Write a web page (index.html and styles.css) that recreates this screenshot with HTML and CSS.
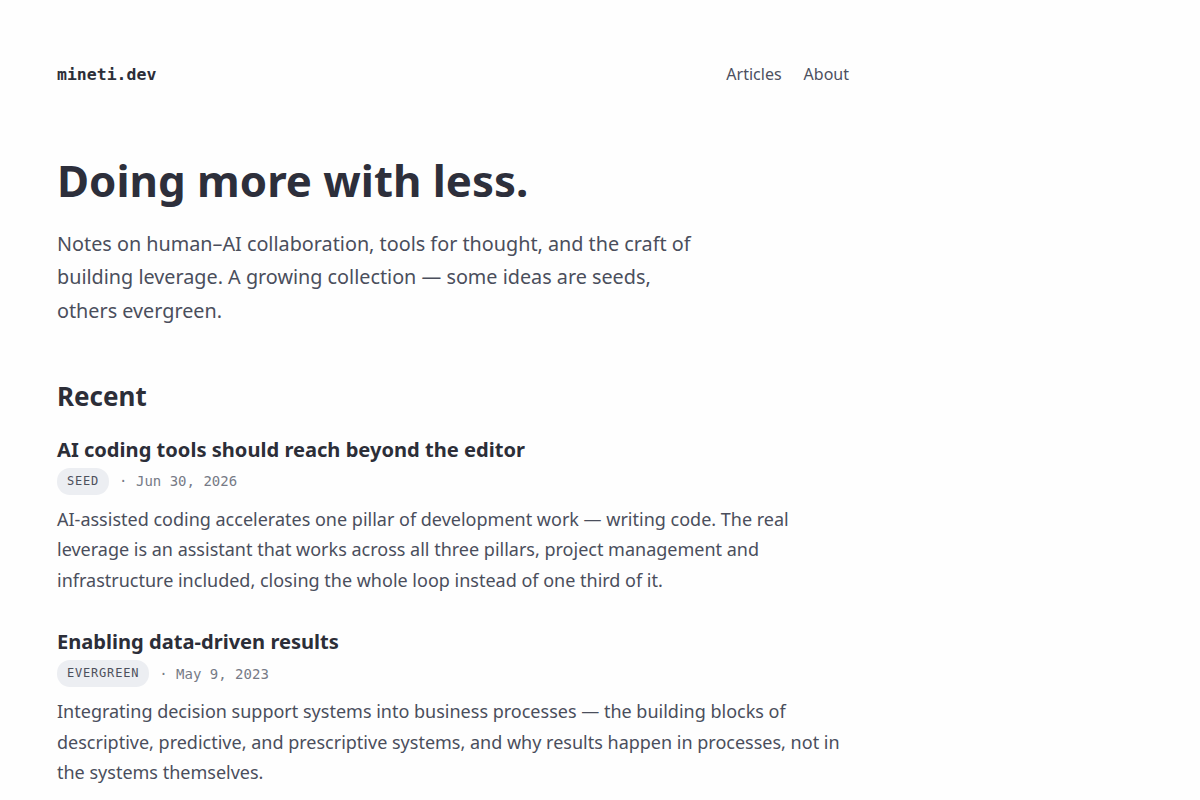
FILE: index.html
```html
<!DOCTYPE html>
<html>
<head>
    <title>mineti.dev</title>
    <meta charset="UTF-8">
    <meta name="viewport" content="width=device-width, initial-scale=1.0">
    <link rel="stylesheet" href="styles.css">
</head>
<body>
    <div class="container">
        <header class="site-header">
            <a class="logo" href="/">mineti.dev</a>
            <nav class="nav">
                <a href="/articles">Articles</a>
                <a href="/about">About</a>
            </nav>
        </header>

        <section class="hero">
            <h1>Doing more with less.</h1>
            <p class="intro">Notes on human–AI collaboration, tools for thought, and the craft of building leverage. A growing collection — some ideas are seeds, others evergreen.</p>
        </section>

        <section class="recent">
            <h2>Recent</h2>

            <article class="post">
                <h3><a href="/articles/ai-coding-tools">AI coding tools should reach beyond the editor</a></h3>
                <div class="meta">
                    <span class="badge">Seed</span>
                    <span class="date">· Jun 30, 2026</span>
                </div>
                <p>AI-assisted coding accelerates one pillar of development work — writing code. The real leverage is an assistant that works across all three pillars, project management and infrastructure included, closing the whole loop instead of one third of it.</p>
            </article>

            <article class="post">
                <h3><a href="/articles/data-driven-results">Enabling data-driven results</a></h3>
                <div class="meta">
                    <span class="badge">Evergreen</span>
                    <span class="date">· May 9, 2023</span>
                </div>
                <p>Integrating decision support systems into business processes — the building blocks of descriptive, predictive, and prescriptive systems, and why results happen in processes, not in the systems themselves.</p>
            </article>
        </section>
    </div>
</body>
</html>
```

FILE: styles.css
```css
body {
    font-family: "Noto Sans", sans-serif;
    background-color: #fefefe;
    color: #2c2e38;
    margin: 0;
}
a {
    color: inherit;
    text-decoration: none;
}
.container {
    max-width: 792px;
    padding: 60px 57px;
}
.site-header {
    display: flex;
    justify-content: space-between;
    align-items: center;
    height: 28px;
}
.logo {
    font-family: "DejaVu Sans Mono", monospace;
    font-weight: bold;
    font-size: 16.5px;
    color: #2c2e38;
}
.nav {
    display: flex;
    gap: 22px;
    font-size: 16px;
}
.nav a {
    color: #4c5060;
}
.hero {
    margin-top: 66px;
}
h1 {
    font-size: 43.8px;
    line-height: 1.2;
    font-weight: bold;
    margin: 0;
    color: #2d2f3b;
}
.intro {
    font-size: 19.8px;
    line-height: 33.5px;
    color: #4a4e5c;
    max-width: 650px;
    margin: 20px 0 0;
}
.recent {
    margin-top: 53px;
}
h2 {
    font-size: 26px;
    line-height: 1.3;
    margin: 0 0 23px;
}
.post {
    margin-bottom: 34px;
}
.post h3 {
    font-size: 20.1px;
    line-height: 26px;
    margin: 0;
    color: #2c2e38;
}
.meta {
    display: flex;
    align-items: center;
    gap: 10px;
    margin-top: 5px;
    font-family: "DejaVu Sans Mono", monospace;
    font-size: 14px;
}
.badge {
    background-color: #eceef2;
    color: #4c505c;
    text-transform: uppercase;
    font-size: 12px;
    letter-spacing: 0.8px;
    padding: 6px 10px 7px;
    border-radius: 13px;
}
.date {
    color: #767a86;
}
.post p {
    font-size: 18px;
    line-height: 30.5px;
    color: #4a4e5c;
    margin: 9px 0 0;
}
```
